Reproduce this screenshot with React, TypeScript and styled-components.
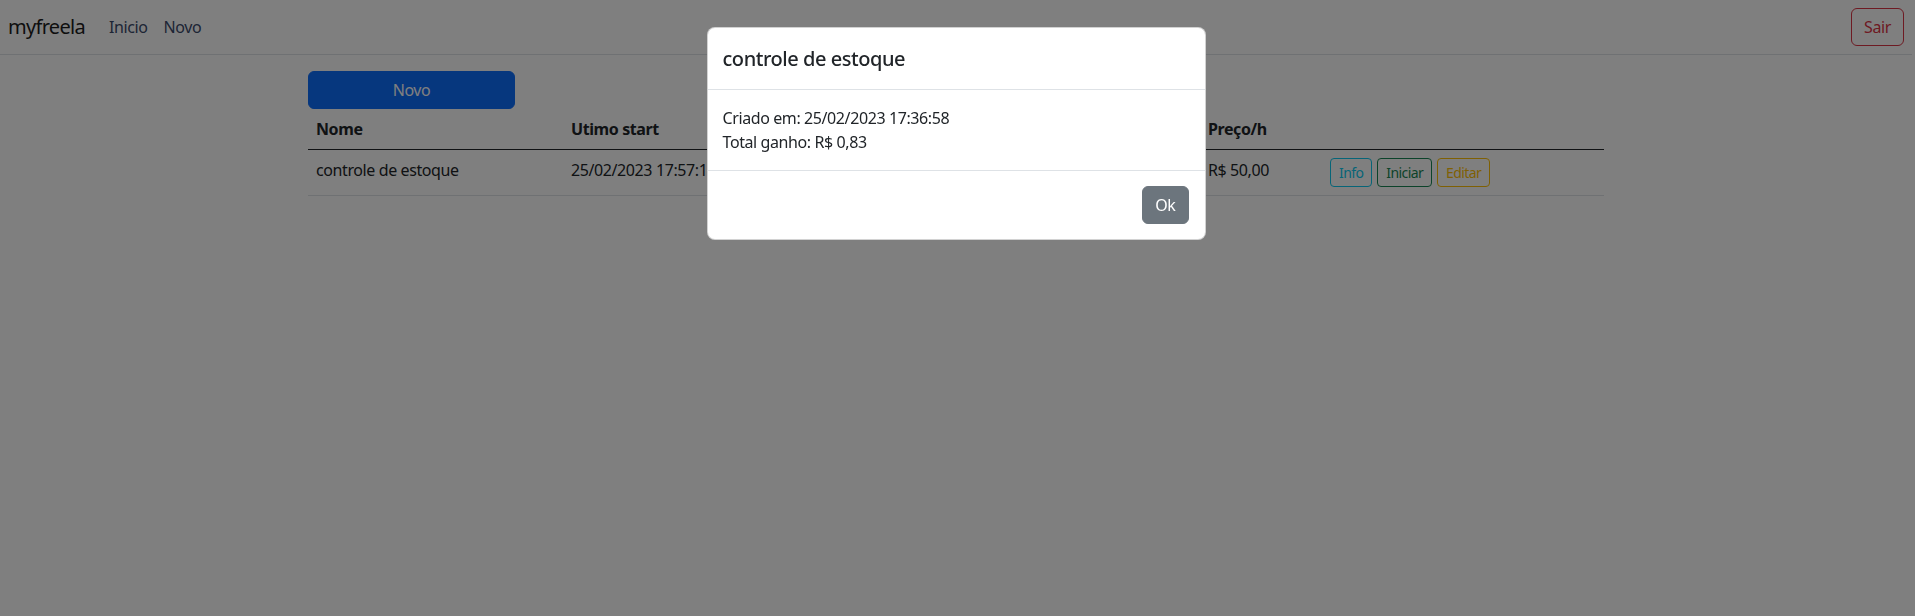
import React from 'react';
import styled, { createGlobalStyle, css } from 'styled-components';

const GlobalStyle = createGlobalStyle`
    * {
        box-sizing: border-box;
    }

    body {
        margin: 0;
        padding-right: 3px;
        background: #fff;
        color: #212529;
        font-family: "Noto Sans", sans-serif;
        font-size: 16px;
        line-height: 1.5;
        letter-spacing: -0.4px;
    }
`;

const Navbar = styled.nav`
    display: flex;
    align-items: center;
    justify-content: space-between;
    height: 55px;
    padding: 0 8px;
    border-bottom: 1px solid #dee2e6;
    background: #fff;
`;

const NavLeft = styled.div`
    display: flex;
    align-items: center;
`;

const Brand = styled.a`
    margin-right: 16px;
    padding: 5px 0;
    font-size: 20px;
    letter-spacing: -0.7px;
    color: #1c1c1c;
    text-decoration: none;
`;

const NavLink = styled.a`
    padding: 8px;
    color: #3b4a6b;
    text-decoration: none;
`;

type Variant = 'primary' | 'secondary' | 'danger' | 'info' | 'success' | 'warning';

const palette: Record<Variant, string> = {
    primary: '#0d6efd',
    secondary: '#6c757d',
    danger: '#dc3545',
    info: '#0dcaf0',
    success: '#198754',
    warning: '#ffc107',
};

const Button = styled.button<{ $variant: Variant; $outline?: boolean; $small?: boolean }>`
    display: inline-block;
    margin: 0;
    border: 1px solid ${({ $variant }) => palette[$variant]};
    border-radius: ${({ $small }) => ($small ? '4px' : '6px')};
    padding: ${({ $small }) => ($small ? '3px 8px' : '6px 12px')};
    font-family: inherit;
    font-size: ${({ $small }) => ($small ? '14px' : '16px')};
    letter-spacing: ${({ $small }) => ($small ? '-0.6px' : '-0.4px')};
    line-height: 1.5;
    cursor: pointer;

    ${({ $outline, $variant }) =>
        $outline
            ? css`
                  background: transparent;
                  color: ${palette[$variant]};
              `
            : css`
                  background: ${palette[$variant]};
                  color: #fff;
              `}
`;

const Container = styled.main`
    max-width: 1320px;
    margin: 16px auto 0;
    padding: 0 12px;
`;

const NewButton = styled(Button)`
    display: block;
    width: 207px;
`;

const Table = styled.table`
    width: 100%;
    border-collapse: collapse;
    table-layout: fixed;
`;

const Th = styled.th`
    padding: 8px;
    border-bottom: 1px solid #212529;
    text-align: left;
    font-weight: 700;
    white-space: nowrap;
    overflow: hidden;
`;

const Td = styled.td`
    padding: 8px;
    border-bottom: 1px solid #dee2e6;
    vertical-align: top;
    white-space: nowrap;
    overflow: hidden;
`;

const Actions = styled.div`
    display: flex;
    gap: 5px;
`;

const Backdrop = styled.div`
    position: fixed;
    inset: 0;
    background: rgba(0, 0, 0, 0.5);
`;

const Modal = styled.div`
    position: fixed;
    top: 27px;
    left: calc(50% - 251px);
    width: 499px;
    border: 1px solid rgba(0, 0, 0, 0.175);
    border-radius: 8px;
    background: #fff;
`;

const ModalHeader = styled.div`
    padding: 16px 15px 15px;
    border-bottom: 1px solid #dee2e6;
`;

const ModalTitle = styled.h5`
    margin: 0;
    font-size: 20px;
    font-weight: 500;
    letter-spacing: -0.45px;
    line-height: 1.5;
`;

const ModalBody = styled.div`
    padding: 16px 15px;
`;

const Line = styled.div``;

const ModalFooter = styled.div`
    display: flex;
    justify-content: flex-end;
    padding: 11px 12px;
    border-top: 1px solid #dee2e6;

    & > * {
        margin: 4px;
    }
`;

export default function App() {
    return (
        <>
            <GlobalStyle />
            <Navbar>
                <NavLeft>
                    <Brand href="#">myfreela</Brand>
                    <NavLink href="#">Inicio</NavLink>
                    <NavLink href="#">Novo</NavLink>
                </NavLeft>
                <Button $variant="danger" $outline>
                    Sair
                </Button>
            </Navbar>
            <Container>
                <NewButton $variant="primary">Novo</NewButton>
                <Table>
                    <colgroup>
                        <col style={{ width: 255 }} />
                        <col style={{ width: 637 }} />
                        <col style={{ width: 122 }} />
                        <col />
                    </colgroup>
                    <thead>
                        <tr>
                            <Th>Nome</Th>
                            <Th>Utimo start</Th>
                            <Th>Preço/h</Th>
                            <Th />
                        </tr>
                    </thead>
                    <tbody>
                        <tr>
                            <Td>controle de estoque</Td>
                            <Td>25/02/2023 17:57:16</Td>
                            <Td>R$ 50,00</Td>
                            <Td>
                                <Actions>
                                    <Button $variant="info" $outline $small>
                                        Info
                                    </Button>
                                    <Button $variant="success" $outline $small>
                                        Iniciar
                                    </Button>
                                    <Button $variant="warning" $outline $small>
                                        Editar
                                    </Button>
                                </Actions>
                            </Td>
                        </tr>
                    </tbody>
                </Table>
            </Container>
            <Backdrop />
            <Modal>
                <ModalHeader>
                    <ModalTitle>controle de estoque</ModalTitle>
                </ModalHeader>
                <ModalBody>
                    <Line>Criado em: 25/02/2023 17:36:58</Line>
                    <Line>Total ganho: R$ 0,83</Line>
                </ModalBody>
                <ModalFooter>
                    <Button $variant="secondary">Ok</Button>
                </ModalFooter>
            </Modal>
        </>
    );
}
